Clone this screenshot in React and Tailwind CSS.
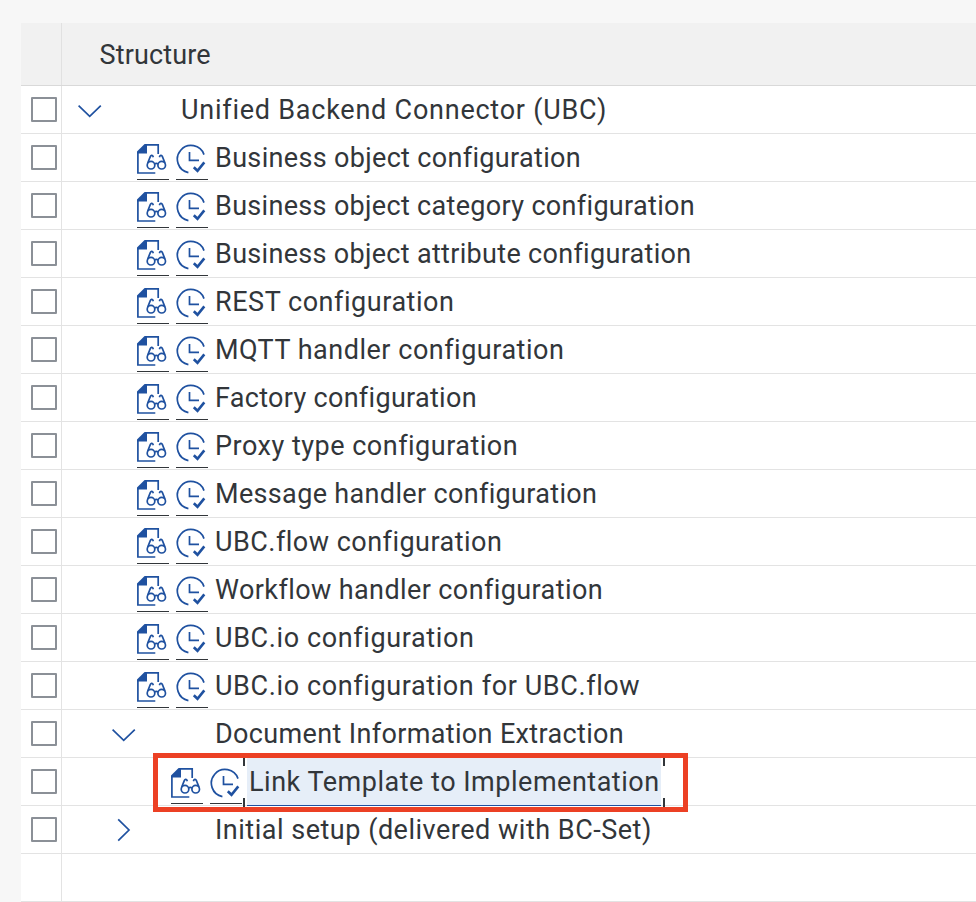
const rows = [
  { kind: 'root', text: 'Unified Backend Connector (UBC)', track: 'tracking-[0.76px]' },
  { kind: 'item', text: 'Business object configuration', track: 'tracking-[0.33px]' },
  { kind: 'item', text: 'Business object category configuration', track: 'tracking-[0.32px]' },
  { kind: 'item', text: 'Business object attribute configuration', track: 'tracking-[0.31px]' },
  { kind: 'item', text: 'REST configuration', track: 'tracking-[0.54px]' },
  { kind: 'item', text: 'MQTT handler configuration', track: 'tracking-[0.51px]' },
  { kind: 'item', text: 'Factory configuration', track: 'tracking-[0.3px]' },
  { kind: 'item', text: 'Proxy type configuration', track: 'tracking-[0.5px]' },
  { kind: 'item', text: 'Message handler configuration', track: 'tracking-[0.34px]' },
  { kind: 'item', text: 'UBC.flow configuration', track: 'tracking-[0.48px]' },
  { kind: 'item', text: 'Workflow handler configuration', track: 'tracking-[0.4px]' },
  { kind: 'item', text: 'UBC.io configuration', track: 'tracking-[0.62px]' },
  { kind: 'item', text: 'UBC.io configuration for UBC.flow', track: 'tracking-[0.61px]' },
  { kind: 'open', text: 'Document Information Extraction', track: 'tracking-[0.35px]' },
  { kind: 'selected', text: 'Link Template to Implementation', track: 'tracking-[0.51px]' },
  { kind: 'closed', text: 'Initial setup (delivered with BC-Set)', track: 'tracking-[0.51px]' },
];

function DocIcon() {
  return (
    <span className="mt-[9px] h-[37px] w-8 shrink-0 border-b border-[#32363a]">
      <svg width="32" height="34" viewBox="0 0 32 34" fill="none" stroke="#1f51a0" strokeWidth="1.7">
        <path d="M0.9 9V30H18.3M8.5 1.9H21.2V11" />
        <path d="M10 1V10.4H0V8.6L7.6 1Z" fill="#1f51a0" stroke="none" />
        <circle cx="14" cy="22.2" r="3.8" />
        <circle cx="24.7" cy="22.2" r="3.8" />
        <path d="M17.4 20.9Q19.3 19.9 21.3 20.9M10.7 20L13.4 13.4C14 11.9 15.8 12 16.3 14.2M28 20L25.3 13.4C24.7 11.9 22.9 12 22.4 14.2" />
      </svg>
    </span>
  );
}

function ClockIcon() {
  return (
    <span className="mt-[9px] ml-[7px] h-[37px] w-8 shrink-0 border-b border-[#32363a]">
      <svg width="32" height="34" viewBox="0 0 32 34" fill="none" stroke="#1f51a0" strokeWidth="1.7">
        <path d="M28 11.6A13.7 13.7 0 1 0 12.4 29.6M13.5 9V17.3H23" />
        <path d="M17.8 24.2L21.5 27.8L28.3 19.4" strokeWidth="2.6" />
      </svg>
    </span>
  );
}

function Chevron({ closed }) {
  return (
    <svg className="shrink-0" width="24" height="47" viewBox="0 0 24 47" fill="none" stroke="#1f51a0" strokeWidth="1.7">
      <path d={closed ? 'M6.2 13.3L17 24L6.2 34.7' : 'M0.6 19.7L11.7 30.3L22.8 19.7'} />
    </svg>
  );
}

function Label({ row, className }) {
  return <span className={`whitespace-pre leading-[49px] ${row.track} ${className}`}>{row.text}</span>;
}

function SelectedCell({ row }) {
  return (
    <div className="relative flex pl-[109px]">
      <DocIcon />
      <ClockIcon />
      <div className="relative ml-[5px] h-12 w-[414px] border-b border-[#1f51a0] bg-[#e6eef8] pl-[2px]">
        <Label row={row} className="" />
        <i className="absolute top-0 -left-1 h-2 w-0.5 bg-[#32363a]" />
        <i className="absolute top-10 -left-1 h-[9px] w-0.5 bg-[#32363a]" />
        <i className="absolute top-0 -right-1 h-2 w-0.5 bg-[#32363a]" />
        <i className="absolute top-10 -right-1 h-[9px] w-0.5 bg-[#32363a]" />
      </div>
      <div className="absolute -top-[5px] left-[91px] z-10 h-[59px] w-[535px] border-[5px] border-[#ec4024]" />
    </div>
  );
}

function Cell({ row }) {
  if (row.kind === 'selected') return <SelectedCell row={row} />;
  if (row.kind === 'item') {
    return (
      <div className="flex pl-[75px]">
        <DocIcon />
        <ClockIcon />
        <Label row={row} className="ml-[7px]" />
      </div>
    );
  }
  if (row.kind === 'root') {
    return (
      <div className="flex pl-[16px]">
        <Chevron />
        <Label row={row} className="ml-[79px]" />
      </div>
    );
  }
  return (
    <div className="flex pl-[50px]">
      <Chevron closed={row.kind === 'closed'} />
      <Label row={row} className="ml-[79px]" />
    </div>
  );
}

export default function App() {
  return (
    <div className="h-[902px] w-[976px] overflow-hidden bg-[#f7f7f7] pt-[23px] pl-[21px] font-['Roboto',sans-serif] text-[27px] text-[#32363a]">
      <div className="flex h-[63px] border-b border-[#d9d9d9] bg-[#f1f1f1]">
        <div className="w-[41px] border-r border-[#e1e1e1]" />
        <div className="pl-[37.5px] leading-[65px] tracking-[0.15px]">Structure</div>
      </div>
      {rows.map((row) => (
        <div key={row.text} className="flex h-12 border-b border-[#e3e3e3] bg-white">
          <div className="w-[41px] shrink-0 border-r border-[#e3e3e3] pt-[11px] pl-[10px]">
            <div className="h-[25px] w-[26px] rounded-[1px] border-2 border-[#8b9097]" />
          </div>
          <Cell row={row} />
        </div>
      ))}
      <div className="flex h-12 border-b border-[#e3e3e3] bg-white">
        <div className="w-[41px] border-r border-[#e3e3e3]" />
      </div>
    </div>
  );
}
